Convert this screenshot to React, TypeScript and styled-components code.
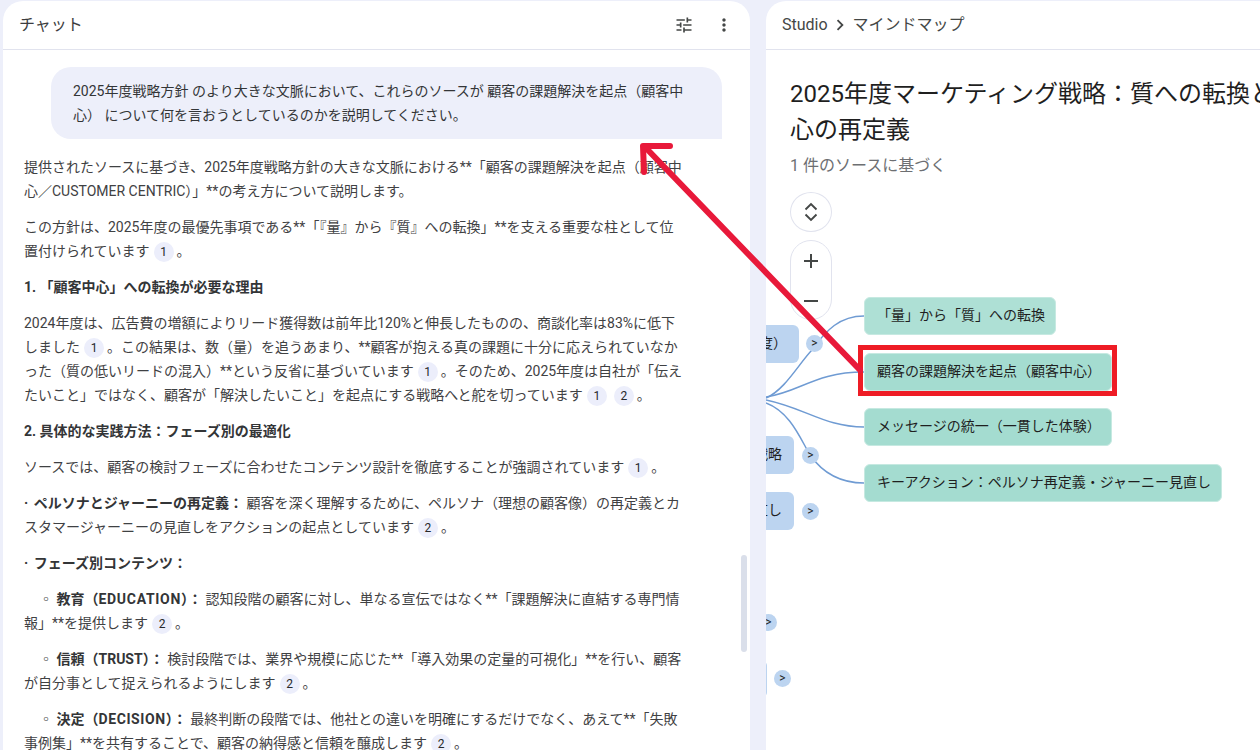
import React from "react";
import styled, { createGlobalStyle } from "styled-components";
import { MdChevronRight, MdMoreVert, MdOutlineTune, MdAdd, MdRemove } from "react-icons/md";

const GlobalStyle = createGlobalStyle`
  html, body {
    margin: 0;
    height: 100%;
    overflow: hidden;
    background: #edeffa;
  }
  body {
    font-family: Roboto, "Noto Sans CJK JP", "Noto Sans", sans-serif;
  }
`;

const Cite = ({ n }: { n: number }) => <Chip>{n}</Chip>;

const connectors = [
  "M766 398 C785 390 800 362 812 350 C826 330 840 316 864 316",
  "M766 397 C800 392 815 372 864 372",
  "M766 400 C805 408 825 427 864 427",
  "M766 403 C790 412 800 438 810 455 C822 472 840 483 864 483",
];

const leafNodes = [
  { x: 864, y: 297, w: 192, text: "「量」から「質」への転換", light: true },
  { x: 864, y: 353, w: 248, text: "顧客の課題解決を起点（顧客中心）" },
  { x: 864, y: 408, w: 248, text: "メッセージの統一（一貫した体験）" },
  { x: 864, y: 464, w: 358, text: "キーアクション：ペルソナ再定義・ジャーニー見直し" },
];

const branchNodes = [
  { right: 799, y: 325, text: "顧客中心への転換（2025年度）" },
  { right: 794, y: 436, text: "コンテンツ戦略" },
  { right: 794, y: 492, text: "ジャーニー見直し" },
  { right: 767, y: 660, text: "組織と体制" },
];

const toggles = [
  { x: 814, y: 343 },
  { x: 810, y: 455 },
  { x: 810, y: 511 },
  { x: 768, y: 622 },
  { x: 782, y: 678 },
];

export default function App() {
  return (
    <Page>
      <GlobalStyle />
      <ChatPanel>
        <PanelHeader>
          <PanelTitle>チャット</PanelTitle>
          <HeaderActions>
            <MdOutlineTune size={20} />
            <MdMoreVert size={20} />
          </HeaderActions>
        </PanelHeader>
        <ChatBody>
          <Bubble>
            2025年度戦略方針 のより大きな文脈において、これらのソースが 顧客の課題解決を起点（顧客中心） について何を言おうとしているのかを説明してください。
          </Bubble>
          <Answer>
            <p>
              提供されたソースに基づき、2025年度戦略方針の大きな文脈における**「顧客の課題解決を起点（顧客中心／CUSTOMER CENTRIC）」**の考え方について説明します。
            </p>
            <p>
              この方針は、2025年度の最優先事項である**「『量』から『質』への転換」**を支える重要な柱として位置付けられています<Cite n={1} />。
            </p>
            <p>
              <b>1. 「顧客中心」への転換が必要な理由</b>
            </p>
            <p>
              2024年度は、広告費の増額によりリード獲得数は前年比120%と伸長したものの、商談化率は83%に低下しました<Cite n={1} />。この結果は、数（量）を追うあまり、**顧客が抱える真の課題に十分に応えられていなかった（質の低いリードの混入）**という反省に基づいています<Cite n={1} />。そのため、2025年度は自社が「伝えたいこと」ではなく、顧客が「解決したいこと」を起点にする戦略へと舵を切っています<Cite n={1} /><Cite n={2} />。
            </p>
            <p>
              <b>2. 具体的な実践方法：フェーズ別の最適化</b>
            </p>
            <p>
              ソースでは、顧客の検討フェーズに合わせたコンテンツ設計を徹底することが強調されています<Cite n={1} />。
            </p>
            <p>
              <BulletLabel>· ペルソナとジャーニーの再定義：</BulletLabel> 顧客を深く理解するために、ペルソナ（理想の顧客像）の再定義とカスタマージャーニーの見直しをアクションの起点としています<Cite n={2} />。
            </p>
            <p>
              <BulletLabel>· フェーズ別コンテンツ：</BulletLabel>
            </p>
            <SubItem>
              ◦ <b>教育（<Caps $track={0.7}>EDUCATION</Caps>）：</b> 認知段階の顧客に対し、単なる宣伝ではなく**「課題解決に直結する専門情報」**を提供します<Cite n={2} />。
            </SubItem>
            <SubItem>
              ◦ <b>信頼（<Caps $track={0}>TRUST</Caps>）：</b> 検討段階では、業界や規模に応じた**「導入効果の定量的可視化」**を行い、顧客が自分事として捉えられるようにします<Cite n={2} />。
            </SubItem>
            <SubItem>
              ◦ <b>決定（<Caps $track={0.6}>DECISION</Caps>）：</b> 最終判断の段階では、他社との違いを明確にするだけでなく、あえて**「失敗事例集」**を共有することで、顧客の納得感と信頼を醸成します<Cite n={2} />。
            </SubItem>
          </Answer>
        </ChatBody>
        <ScrollThumb />
      </ChatPanel>

      <MapPanel>
        <PanelHeader>
          <Crumbs>
            Studio
            <MdChevronRight size={22} />
            マインドマップ
          </Crumbs>
        </PanelHeader>
        <MapBody>
          <Canvas>
            <Wires viewBox="766 1 494 749">
              {connectors.map((d) => (
                <path key={d} d={d} fill="none" stroke="#6f9bd3" strokeWidth="1.5" />
              ))}
            </Wires>
            {branchNodes.map((n) => (
              <BranchNode key={n.y} $right={n.right} $y={n.y}>
                {n.text}
              </BranchNode>
            ))}
            {leafNodes.map((n) => (
              <LeafNode key={n.y} $x={n.x} $y={n.y} $w={n.w} $light={n.light}>
                {n.text}
              </LeafNode>
            ))}
            {toggles.map((t) => (
              <Toggle key={t.y} $x={t.x} $y={t.y}>
                &gt;
              </Toggle>
            ))}
          </Canvas>
          <MapTitle>2025年度マーケティング戦略：質への転換と顧客中心の再定義</MapTitle>
          <MapSubtitle>1 件のソースに基づく</MapSubtitle>
          <Controls>
            <RoundButton>
              <svg width="24" height="24" viewBox="0 0 24 24" fill="none" stroke="currentColor" strokeWidth="1.9">
                <path d="M6.5 9.5 L12 4 L17.5 9.5 M6.5 14.5 L12 20 L17.5 14.5" />
              </svg>
            </RoundButton>
            <ZoomPill>
              <MdAdd size={24} />
              <MdRemove size={24} />
            </ZoomPill>
          </Controls>
        </MapBody>
      </MapPanel>

      <Annotation viewBox="0 0 1260 750">
        <rect x="860.5" y="347.5" width="254" height="46" fill="none" stroke="#ee1c25" strokeWidth="5" />
        <g fill="none" stroke="#e8193a" strokeWidth="6" strokeLinecap="round">
          <path d="M860 370 L645 147" />
          <path d="M670 146 L643 146 L644 172" strokeLinejoin="round" />
        </g>
      </Annotation>
    </Page>
  );
}

const Page = styled.div`
  position: relative;
  display: flex;
  gap: 16px;
  width: 1260px;
  height: 750px;
  padding: 1px 0 0 3px;
  box-sizing: border-box;
  overflow: hidden;
  color: #3f4143;
  font-size: 14px;
  line-height: 24px;
`;

const Panel = styled.section`
  position: relative;
  background: #fff;
  border-radius: 20px 20px 0 0;
  height: 800px;
  overflow: hidden;
`;

const ChatPanel = styled(Panel)`
  flex: 0 0 747px;
`;

const MapPanel = styled(Panel)`
  flex: 0 0 660px;
`;

const PanelHeader = styled.header`
  display: flex;
  align-items: center;
  justify-content: space-between;
  height: 48px;
  border-bottom: 1px solid #e1e3ee;
  padding: 0 16px;
`;

const PanelTitle = styled.h2`
  margin: 0;
  font-size: 16px;
  font-weight: 400;
  color: #3c3d40;
`;

const HeaderActions = styled.div`
  display: flex;
  align-items: center;
  gap: 20px;
  color: #444746;
`;

const ChatBody = styled.div`
  padding: 17px 28px 0 21px;
`;

const Bubble = styled.div`
  margin-left: 27px;
  padding: 12px 22px;
  background: #edeffa;
  border-radius: 20px 20px 0 20px;
  color: #333537;
`;

const Answer = styled.div`
  margin-top: 16px;
  padding-right: 36px;

  p {
    margin: 0 0 12px;
  }
  b {
    font-weight: 700;
    color: #333537;
  }
`;

const BulletLabel = styled.b`
  word-spacing: 2px;
`;

const SubItem = styled.p`
  text-indent: 15px;
`;

const Caps = styled.span<{ $track: number }>`
  letter-spacing: ${(p) => p.$track}px;
`;

const Chip = styled.span`
  display: inline-block;
  width: 20px;
  height: 20px;
  margin: 0 3px 0 4px;
  border-radius: 50%;
  background: #eceefb;
  color: #26282b;
  font-size: 12px;
  line-height: 20px;
  text-align: center;
  text-indent: 0;
`;

const ScrollThumb = styled.div`
  position: absolute;
  left: 738px;
  top: 554px;
  width: 6px;
  height: 97px;
  border-radius: 3px;
  background: #dadfea;
`;

const Crumbs = styled.div`
  display: flex;
  align-items: center;
  gap: 1.5px;
  font-size: 16px;
  color: #444746;
`;

const MapBody = styled.div`
  position: relative;
  padding: 26px 24px 0;
`;

const Canvas = styled.div`
  position: absolute;
  left: 0;
  top: -49px;
  width: 494px;
  height: 749px;
  overflow: hidden;
`;

const Wires = styled.svg`
  position: absolute;
  left: 0;
  top: 0;
  width: 494px;
  height: 749px;
`;

const LeafNode = styled.div<{ $x: number; $y: number; $w: number; $light?: boolean }>`
  position: absolute;
  left: ${(p) => p.$x - 766}px;
  top: ${(p) => p.$y - 1}px;
  width: ${(p) => p.$w}px;
  height: 38px;
  box-sizing: border-box;
  display: flex;
  align-items: center;
  padding: 0 12px 2px;
  border: 1px solid #c6e9e1;
  border-radius: 6px;
  background: ${(p) => (p.$light ? "#aee0d5" : "#a4dcd0")};
  color: #1f1f1f;
  white-space: nowrap;
`;

const BranchNode = styled.div<{ $right: number; $y: number }>`
  position: absolute;
  right: ${(p) => 494 - (p.$right - 766)}px;
  top: ${(p) => p.$y - 1}px;
  height: 38px;
  box-sizing: border-box;
  display: flex;
  align-items: center;
  padding: 0 12px 2px;
  border-radius: 6px;
  background: #bcd4f0;
  color: #1f1f1f;
  white-space: nowrap;
`;

const Toggle = styled.div<{ $x: number; $y: number }>`
  position: absolute;
  left: ${(p) => p.$x - 766 - 8}px;
  top: ${(p) => p.$y - 1 - 8}px;
  width: 17px;
  height: 17px;
  border-radius: 50%;
  background: #bcd4f0;
  color: #1f1f1f;
  font-size: 12px;
  line-height: 16px;
  text-align: center;
`;

const MapTitle = styled.h1`
  position: relative;
  margin: 0;
  width: 570px;
  font-size: 24px;
  font-weight: 400;
  line-height: 36px;
  color: #1f1f1f;
`;

const MapSubtitle = styled.div`
  position: relative;
  margin-top: 6px;
  font-size: 16px;
  color: #6d6f72;
`;

const Controls = styled.div`
  position: relative;
  display: flex;
  flex-direction: column;
  gap: 8px;
  width: 42px;
  margin-top: 14px;
  color: #444746;
`;

const RoundButton = styled.div`
  display: flex;
  align-items: center;
  justify-content: center;
  height: 40px;
  box-sizing: border-box;
  border: 1px solid #e1e3ee;
  border-radius: 50%;
  background: #fff;
`;

const ZoomPill = styled.div`
  display: flex;
  flex-direction: column;
  align-items: center;
  justify-content: space-between;
  height: 80px;
  box-sizing: border-box;
  padding: 8px 0 6px;
  border: 1px solid #e1e3ee;
  border-radius: 21px;
`;

const Annotation = styled.svg`
  position: absolute;
  left: 0;
  top: 0;
  width: 1260px;
  height: 750px;
  pointer-events: none;
`;
